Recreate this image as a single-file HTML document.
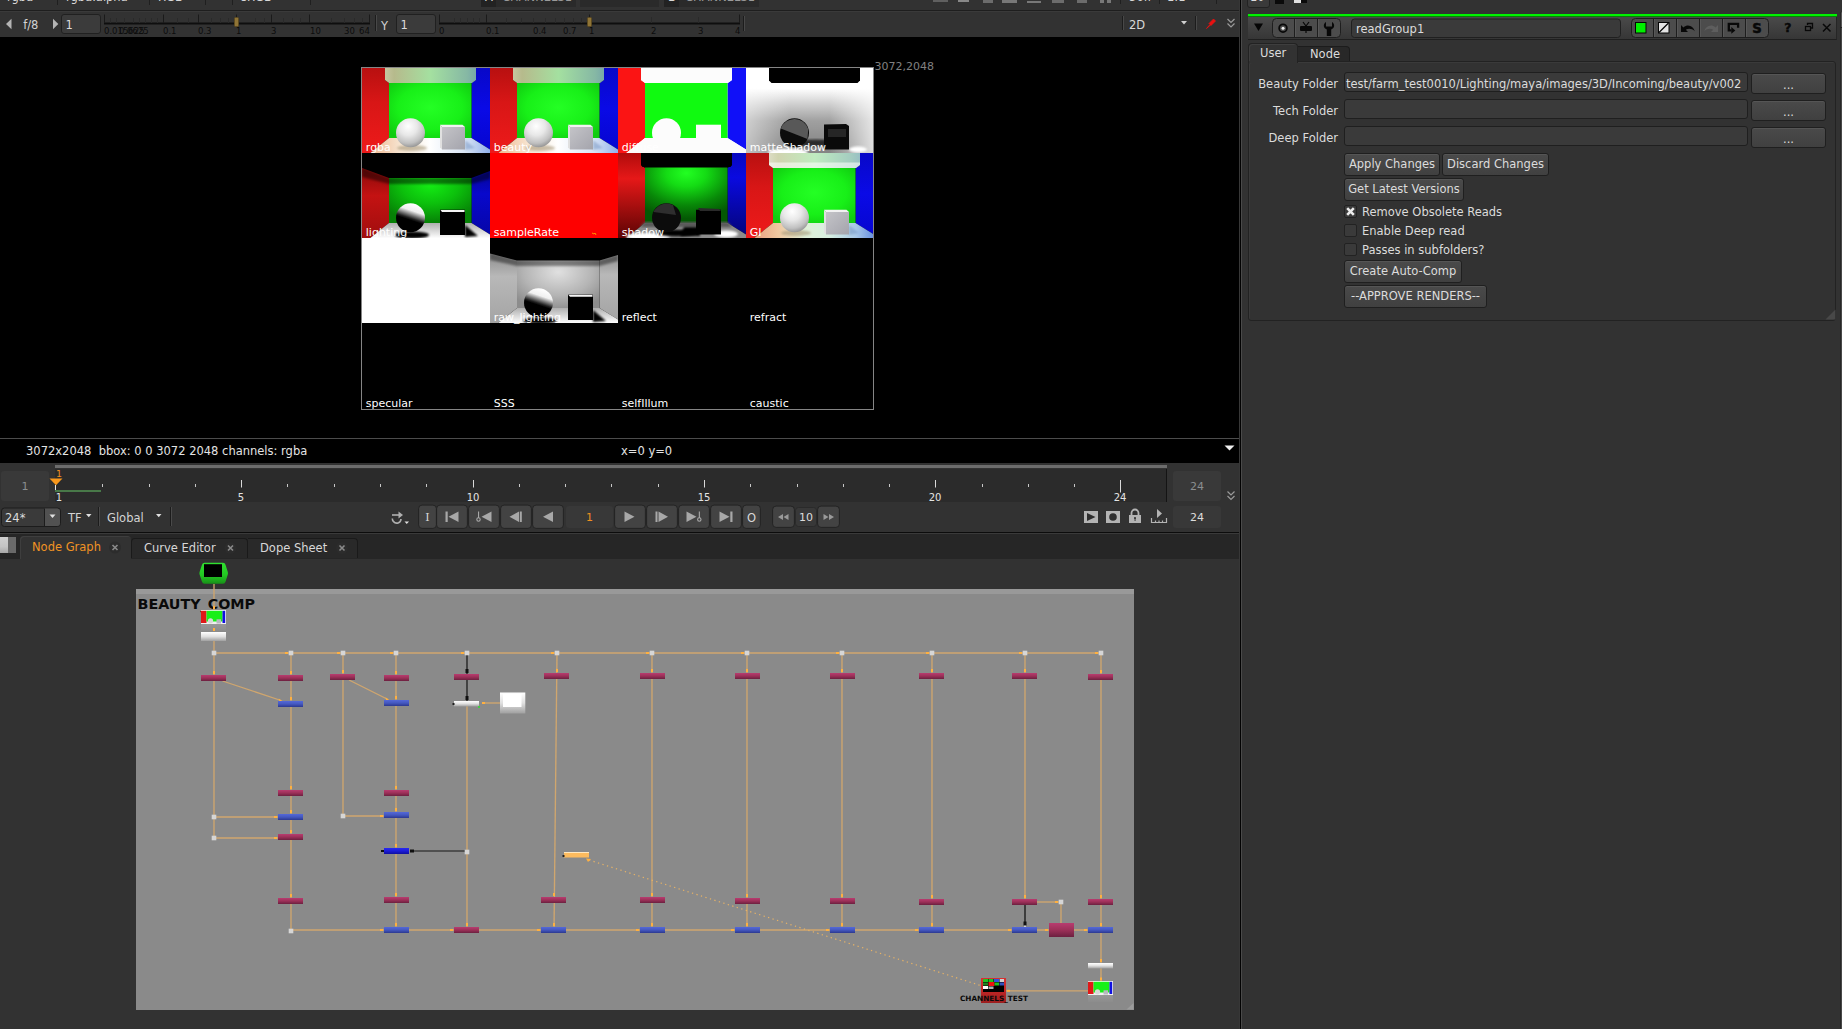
<!DOCTYPE html>
<html lang="en"><head><meta charset="utf-8"><title>Nuke</title>
<style>
html,body{margin:0;padding:0;background:#323232;}
body{width:1842px;height:1029px;overflow:hidden;font-family:"DejaVu Sans","Liberation Sans",sans-serif;font-size:11.5px;color:#dcdcdc;}
#app{position:relative;width:1842px;height:1029px;overflow:hidden;background:#323232;}
.abs{position:absolute;}
.t{position:absolute;white-space:pre;line-height:14px;}
svg{position:absolute;overflow:visible;}
.tk{position:absolute;top:25.5px;font-size:8.5px;line-height:10px;color:#0c0c0c;white-space:pre;}
.gl{font-family:"DejaVu Sans","Liberation Sans",sans-serif;font-size:11px;fill:#fff;}
.box{background:#393939;border-radius:3px;}
.tl{font-family:"DejaVu Sans","Liberation Sans",sans-serif;font-size:10px;fill:#e4e4e4;}
.fld{background:#3a3a3a;border:1px solid #1f1f1f;border-radius:3px;box-sizing:border-box;}
.btn{background:linear-gradient(#4a4a4a,#404040);border:1px solid #1f1f1f;border-radius:3px;box-sizing:border-box;color:#dcdcdc;text-align:center;line-height:21.5px;white-space:pre;box-shadow:inset 0 1px 0 #555;}
.chk{width:13px;height:13px;background:#3a3a3a;border:1px solid #222;border-radius:2px;box-sizing:border-box;}

</style></head>
<body>
<div id="app">
<!-- ===== top cropped toolbar strip ===== -->
<div class="abs" style="left:0;top:0;width:1240px;height:10px;background:#323232;overflow:hidden">
  <div class="t" style="left:7px;top:-10px;font-size:11.5px;color:#d8d8d8">rgba</div>
  <div class="abs" style="left:57px;top:0;width:1px;height:5px;background:#1f1f1f"></div>
  <div class="t" style="left:66px;top:-10px;font-size:11.5px;color:#d8d8d8">rgba.alpha</div>
  <div class="abs" style="left:149px;top:0;width:1px;height:5px;background:#1f1f1f"></div>
  <div class="t" style="left:158px;top:-10px;font-size:11.5px;color:#d8d8d8">RGB</div>
  <div class="abs" style="left:205px;top:0;width:1px;height:5px;background:#1f1f1f"></div>
  <div class="abs" style="left:232px;top:0;width:1px;height:5px;background:#1f1f1f"></div>
  <div class="t" style="left:241px;top:-10px;font-size:11.5px;color:#d8d8d8">sRGB</div>
  <div class="abs" style="left:310px;top:0;width:1px;height:5px;background:#1f1f1f"></div>
  <div class="abs" style="left:481px;top:0;width:95px;height:7px;background:#2a2a2a"></div>
  <div class="abs" style="left:481px;top:0;width:15px;height:7px;background:#222"></div>
  <div class="t" style="left:485px;top:-10px;font-size:11.5px;color:#d8d8d8">A</div>
  <div class="t" style="left:502px;top:-10px;font-size:11.5px;color:#9a9a9a">CHANNELS1</div>
  <div class="abs" style="left:580px;top:0;width:79px;height:7px;background:#2a2a2a"></div>
  <div class="abs" style="left:664px;top:0;width:95px;height:7px;background:#2a2a2a"></div>
  <div class="abs" style="left:664px;top:0;width:15px;height:7px;background:#222"></div>
  <div class="t" style="left:668px;top:-10px;font-size:11.5px;color:#d8d8d8">B</div>
  <div class="t" style="left:685px;top:-10px;font-size:11.5px;color:#9a9a9a">CHANNELS1</div>
  <div class="abs" style="left:933px;top:0;width:15px;height:2px;background:#606060"></div>
  <div class="abs" style="left:958px;top:0;width:11px;height:2px;background:#888"></div>
  <div class="abs" style="left:983px;top:0;width:10px;height:3px;background:#6c6c6c"></div>
  <div class="abs" style="left:1002px;top:0;width:15px;height:3px;background:#787878"></div>
  <div class="abs" style="left:1027px;top:1px;width:14px;height:2px;background:#787878"></div>
  <div class="abs" style="left:1052px;top:0;width:12px;height:3px;background:#6c6c6c"></div>
  <div class="abs" style="left:1077px;top:0;width:10px;height:3px;background:#6c6c6c"></div>
  <div class="abs" style="left:1100px;top:0;width:4px;height:3px;background:#787878"></div>
  <div class="abs" style="left:1107px;top:0;width:4px;height:3px;background:#787878"></div>
  <div class="abs" style="left:1120px;top:0;width:1px;height:4px;background:#1f1f1f"></div>
  <div class="t" style="left:1129px;top:-10px;font-size:11.5px;color:#d8d8d8">56fr</div>
  <div class="abs" style="left:1159px;top:0;width:1px;height:4px;background:#1f1f1f"></div>
  <div class="t" style="left:1167px;top:-10px;font-size:11.5px;color:#d8d8d8">1:1</div>
  <div class="abs" style="left:1216px;top:0;width:1px;height:4px;background:#1f1f1f"></div>
</div>
<div class="abs" style="left:0;top:10px;width:1240px;height:1px;background:#1e1e1e"></div>
<div class="abs" style="left:0;top:11px;width:1240px;height:1px;background:#3a3a3a"></div>

<!-- ===== viewer control row (gain / gamma) ===== -->
<div class="abs" style="left:0;top:12px;width:1240px;height:25px;background:#323232"></div>
<svg style="left:0;top:11px" width="1240" height="27" viewBox="0 11 1240 27">
  <!-- f-stop arrows -->
  <path d="M11.5 18.7 L11.5 29.3 L6 24 Z" fill="#b4b4b4"/>
  <path d="M53 18.7 L53 29.3 L58.3 24 Z" fill="#b4b4b4"/>
  <!-- input boxes -->
  <rect x="61.5" y="14.5" width="39" height="19" rx="2.5" fill="#3b3b3b" stroke="#202020"/>
  <rect x="396.5" y="14.5" width="39" height="19" rx="2.5" fill="#3b3b3b" stroke="#202020"/>
  <!-- gain slider -->
  <g stroke="#0e0e0e" stroke-width="1" fill="none">
    <path d="M104 23.5 H370" stroke-width="2"/>
    <path d="M104.5 14.5 V23 M163.5 14.5 V23 M198.5 14.5 V23 M236.5 14.5 V23 M271.5 14.5 V23 M309.5 14.5 V23 M369.5 14.5 V23" stroke="#1a1a1a"/>
    <path d="M110.5 18 V23 M116.5 18 V23 M124.5 18 V23 M133.5 18 V23 M139.5 18 V23 M145.5 18 V23 M151.5 18 V23 M157.5 18 V23 M177.5 18 V23 M188.5 18 V23 M211.5 18 V23 M220.5 18 V23 M228.5 18 V23 M255.5 18 V23 M264.5 18 V23 M283.5 18 V23 M292.5 18 V23 M300.5 18 V23 M331.5 18 V23 M344.5 18 V23 M354.5 18 V23 M362.5 18 V23" stroke="#2a2a2a"/>
  </g>
  <rect x="234.5" y="17.5" width="4" height="9" rx="1" fill="#8f7436" stroke="#5c4a20"/>
  <!-- separator -->
  <rect x="375" y="15" width="1" height="16" fill="#1c1c1c"/>
  <rect x="376" y="15" width="1" height="16" fill="#484848"/>
  <!-- gamma slider -->
  <g stroke="#0e0e0e" stroke-width="1" fill="none">
    <path d="M439 23.5 H740" stroke-width="2"/>
    <path d="M439.5 14.5 V23 M486.5 14.5 V23 M589.5 14.5 V23 M739.5 14.5 V23" stroke="#1a1a1a"/>
    <path d="M454.5 18 V23 M460.5 18 V23 M467.5 18 V23 M473.5 18 V23 M479.5 18 V23 M506.5 18 V23 M521.5 18 V23 M533.5 18 V23 M545.5 18 V23 M555.5 18 V23 M564.5 18 V23 M573.5 18 V23 M581.5 18 V23 M651.5 17 V23 M698.5 17 V23" stroke="#2a2a2a"/>
  </g>
  <rect x="587.5" y="17.5" width="4" height="9" rx="1" fill="#8f7436" stroke="#5c4a20"/>
  <rect x="743" y="16" width="1" height="15" fill="#1c1c1c"/>
  <rect x="744" y="16" width="1" height="15" fill="#484848"/>
  <!-- 2D dropdown -->
  <rect x="1122" y="16" width="1" height="14" fill="#1c1c1c"/>
  <rect x="1123" y="16" width="1" height="14" fill="#484848"/>
  <path d="M1181 21 L1187 21 L1184 24.5 Z" fill="#d0d0d0"/>
  <rect x="1195" y="16" width="1" height="14" fill="#1c1c1c"/>
  <rect x="1196" y="16" width="1" height="14" fill="#484848"/>
  <!-- red pen -->
  <path d="M1206.5 28.5 L1210 24.5 L1209 23.5 L1213.5 19 L1215.5 21 L1211 25.5 L1210.5 25 Z" fill="#e81010" stroke="#e81010" stroke-width="0.8"/>
  <!-- double chevron -->
  <path d="M1227.5 19 L1231 22.5 L1234.5 19 M1227.5 23.5 L1231 27 L1234.5 23.5" stroke="#9a9a9a" stroke-width="1.2" fill="none"/>
</svg>
<div class="t" style="left:23.2px;top:17.5px;font-size:11.5px;color:#d2d2d2">f/8</div>
<div class="t" style="left:65.5px;top:18px;font-size:11.5px;color:#dcdcdc">1</div>
<div class="t" style="left:381px;top:18.5px;font-size:11.5px;color:#d2d2d2">Y</div>
<div class="t" style="left:400.5px;top:18px;font-size:11.5px;color:#dcdcdc">1</div>
<div class="t" style="left:1129px;top:17.5px;font-size:11.5px;color:#d8d8d8">2D</div>
<div class="tk" style="left:104px">0.015625</div><div class="tk" style="left:119px">0.0625</div>
<div class="tk" style="left:163px">0.1</div><div class="tk" style="left:198px">0.3</div><div class="tk" style="left:236px">1</div>
<div class="tk" style="left:271px">3</div><div class="tk" style="left:310px">10</div><div class="tk" style="left:344px">30</div><div class="tk" style="left:359px">64</div>
<div class="tk" style="left:439px">0</div><div class="tk" style="left:486px">0.1</div><div class="tk" style="left:533px">0.4</div><div class="tk" style="left:563px">0.7</div>
<div class="tk" style="left:589px">1</div><div class="tk" style="left:651px">2</div><div class="tk" style="left:698px">3</div><div class="tk" style="left:735px">4</div>
<!-- ===== viewer ===== -->
<div class="abs" style="left:0;top:37px;width:1240px;height:401px;background:#000"></div>
<svg style="left:0;top:37px" width="1240" height="401" viewBox="0 37 1240 401">
<defs>
<clipPath id="cc0"><rect x="0" y="0" width="128" height="85"/></clipPath><clipPath id="cc1"><rect x="0" y="0" width="128" height="86"/></clipPath>
<linearGradient id="gRed" x1="0" y1="0" x2="0" y2="1"><stop offset="0" stop-color="#b81010"/><stop offset=".4" stop-color="#d81616"/><stop offset="1" stop-color="#ee1a1a"/></linearGradient>
<linearGradient id="gBlue" x1="0" y1="0" x2="0" y2="1"><stop offset="0" stop-color="#0808c8"/><stop offset=".5" stop-color="#0a0ae6"/><stop offset="1" stop-color="#0606d0"/></linearGradient>
<radialGradient id="gGreen" cx=".5" cy=".45" r=".65"><stop offset="0" stop-color="#24ff24"/><stop offset=".6" stop-color="#18f018"/><stop offset="1" stop-color="#10cc10"/></radialGradient>
<linearGradient id="gCeil" x1="0" y1="0" x2="1" y2="0"><stop offset="0" stop-color="#c6c6a0"/><stop offset=".1" stop-color="#b6ba8c"/><stop offset=".5" stop-color="#a4e0a0"/><stop offset=".9" stop-color="#86b8a4"/><stop offset="1" stop-color="#78a8a8"/></linearGradient>
<linearGradient id="gCeilGI" x1="0" y1="0" x2="1" y2="0"><stop offset="0" stop-color="#dcdcc4"/><stop offset=".1" stop-color="#d0d4b0"/><stop offset=".5" stop-color="#c0ecc0"/><stop offset=".9" stop-color="#a4ccc0"/><stop offset="1" stop-color="#98c0c4"/></linearGradient>
<linearGradient id="gFloorGI" x1="0" y1="0" x2="1" y2="0"><stop offset="0" stop-color="#e8a080"/><stop offset=".2" stop-color="#f0c8a0"/><stop offset=".42" stop-color="#e0f0d8"/><stop offset=".62" stop-color="#d8f0e0"/><stop offset=".85" stop-color="#a8c8e8"/><stop offset="1" stop-color="#6890e0"/></linearGradient>
<linearGradient id="gFloor" x1="0" y1="0" x2="1" y2="0"><stop offset="0" stop-color="#f0b890"/><stop offset=".25" stop-color="#f6e4d0"/><stop offset=".5" stop-color="#ffffff"/><stop offset=".8" stop-color="#d8e4f4"/><stop offset="1" stop-color="#90b0ec"/></linearGradient>
<radialGradient id="gSph" cx=".42" cy=".28" r=".78"><stop offset="0" stop-color="#ffffff"/><stop offset=".4" stop-color="#e8e8e8"/><stop offset=".75" stop-color="#c0c0c0"/><stop offset="1" stop-color="#888888"/></radialGradient>
<linearGradient id="gCube" x1="0" y1="0" x2="1" y2="1"><stop offset="0" stop-color="#c4c4c8"/><stop offset="1" stop-color="#a4a4ac"/></linearGradient>
<linearGradient id="gSphL" x1=".62" y1=".02" x2=".36" y2=".8"><stop offset="0" stop-color="#ffffff"/><stop offset=".3" stop-color="#f0f0f0"/><stop offset=".62" stop-color="#202020"/><stop offset=".7" stop-color="#000"/><stop offset="1" stop-color="#000"/></linearGradient>
<linearGradient id="gDkTop" x1="0" y1="0" x2="0" y2="1"><stop offset="0" stop-color="#000" stop-opacity="1"/><stop offset=".22" stop-color="#000" stop-opacity=".95"/><stop offset=".42" stop-color="#000" stop-opacity=".25"/><stop offset=".7" stop-color="#000" stop-opacity=".1"/><stop offset="1" stop-color="#000" stop-opacity=".3"/></linearGradient>
<linearGradient id="gMatte" x1="0" y1="0" x2="0" y2="1"><stop offset="0" stop-color="#fff"/><stop offset=".24" stop-color="#fff"/><stop offset=".42" stop-color="#d0d0d0"/><stop offset=".62" stop-color="#a0a0a0"/><stop offset=".85" stop-color="#8c8c8c"/><stop offset="1" stop-color="#848484"/></linearGradient>
<linearGradient id="gMatteS" x1="0" y1="0" x2="1" y2="0"><stop offset="0" stop-color="#fff" stop-opacity=".5"/><stop offset=".35" stop-color="#fff" stop-opacity="0"/><stop offset=".65" stop-color="#fff" stop-opacity="0"/><stop offset="1" stop-color="#fff" stop-opacity=".75"/></linearGradient>
<radialGradient id="gShGreen" cx=".5" cy=".12" r=".8" fx=".5" fy=".1"><stop offset="0" stop-color="#22ff22"/><stop offset=".3" stop-color="#14dc14"/><stop offset=".7" stop-color="#088808"/><stop offset="1" stop-color="#045804"/></radialGradient>
<linearGradient id="gShRed" x1="0" y1="0" x2="0" y2="1"><stop offset="0" stop-color="#b00c0c"/><stop offset=".3" stop-color="#e61818"/><stop offset="1" stop-color="#5c0404"/></linearGradient>
<linearGradient id="gShBlue" x1="0" y1="0" x2="0" y2="1"><stop offset="0" stop-color="#0808c0"/><stop offset=".3" stop-color="#0a0ae0"/><stop offset="1" stop-color="#04047c"/></linearGradient>
<radialGradient id="gRawBack" cx=".5" cy=".35" r=".7"><stop offset="0" stop-color="#e0e0e0"/><stop offset=".6" stop-color="#b4b4b4"/><stop offset="1" stop-color="#8c8c8c"/></radialGradient>
<linearGradient id="gRawSide" x1="0" y1="0" x2="0" y2="1"><stop offset="0" stop-color="#707070"/><stop offset=".45" stop-color="#b8b8b8"/><stop offset="1" stop-color="#a4a4a4"/></linearGradient>
<radialGradient id="gLGreen" cx=".5" cy=".3" r=".7"><stop offset="0" stop-color="#14ee14"/><stop offset=".5" stop-color="#0cc00c"/><stop offset="1" stop-color="#068006"/></radialGradient>
<linearGradient id="gLRed" x1="0" y1="0" x2="0" y2="1"><stop offset="0" stop-color="#6a0606"/><stop offset=".5" stop-color="#c41212"/><stop offset="1" stop-color="#a00e0e"/></linearGradient>
<linearGradient id="gLBlue" x1="0" y1="0" x2="0" y2="1"><stop offset="0" stop-color="#04046c"/><stop offset=".5" stop-color="#0808cc"/><stop offset="1" stop-color="#0606a8"/></linearGradient>
<linearGradient id="gLFloor" x1="0" y1="0" x2="0" y2="1"><stop offset="0" stop-color="#b0b0b0"/><stop offset="1" stop-color="#ffffff"/></linearGradient>
<filter id="bl1" x="-20%" y="-20%" width="140%" height="140%"><feGaussianBlur stdDeviation="1.2"/></filter>
<filter id="bl2" x="-20%" y="-20%" width="140%" height="140%"><feGaussianBlur stdDeviation="2.5"/></filter>
</defs>
<g transform="translate(362.00,68.00)"><g clip-path="url(#cc0)">
<rect width="128" height="85.25" fill="#000"/>
<polygon points="0,0 23,0 23,12 27,14.9 27,70 8,85.25 0,85.25" fill="url(#gRed)"/>
<polygon points="114,0 128,0 128,81.5 109.5,70 109.5,14.9 114,12" fill="url(#gBlue)"/>
<rect x="27" y="14.5" width="82.5" height="55.7" fill="url(#gGreen)"/>
<polygon points="27,70 109.5,70 128,81.5 128,85.25 8,85.25" fill="url(#gFloor)"/>
<polygon points="23,0 114,0 114,12 110,14.9 27,14.9 23,12" fill="url(#gCeil)"/>
<ellipse cx="50" cy="80" rx="15" ry="3" fill="#a09070" opacity=".55" filter="url(#bl1)"/>
<polygon points="103,72 113,80 103,82" fill="#7090c0" opacity=".5" filter="url(#bl1)"/>
<circle cx="48.5" cy="64.7" r="14.5" fill="url(#gSph)"/>
<polygon points="80,59 103,59 103,81.5 80,81.5" fill="url(#gCube)"/>
<polygon points="78,56.7 100.5,56.7 103,59 80,59" fill="#f2f2f2"/>
<polygon points="78,56.7 80,59 80,81.5 78,79.5" fill="#e0e0e0"/>
</g></g>
<g transform="translate(490.00,68.00)"><g clip-path="url(#cc0)">
<rect width="128" height="85.25" fill="#000"/>
<polygon points="0,0 23,0 23,12 27,14.9 27,70 8,85.25 0,85.25" fill="url(#gRed)"/>
<polygon points="114,0 128,0 128,81.5 109.5,70 109.5,14.9 114,12" fill="url(#gBlue)"/>
<rect x="27" y="14.5" width="82.5" height="55.7" fill="url(#gGreen)"/>
<polygon points="27,70 109.5,70 128,81.5 128,85.25 8,85.25" fill="url(#gFloor)"/>
<polygon points="23,0 114,0 114,12 110,14.9 27,14.9 23,12" fill="url(#gCeil)"/>
<ellipse cx="50" cy="80" rx="15" ry="3" fill="#a09070" opacity=".55" filter="url(#bl1)"/>
<polygon points="103,72 113,80 103,82" fill="#7090c0" opacity=".5" filter="url(#bl1)"/>
<circle cx="48.5" cy="64.7" r="14.5" fill="url(#gSph)"/>
<polygon points="80,59 103,59 103,81.5 80,81.5" fill="url(#gCube)"/>
<polygon points="78,56.7 100.5,56.7 103,59 80,59" fill="#f2f2f2"/>
<polygon points="78,56.7 80,59 80,81.5 78,79.5" fill="#e0e0e0"/>
</g></g>
<g transform="translate(618.00,68.00)"><g clip-path="url(#cc0)">
<rect width="128" height="85.25" fill="#fcfcfc"/>
<polygon points="0,0 23,0 23,12 27,14.9 27,70 8,85.25 0,85.25" fill="#fb1414"/>
<polygon points="114,0 128,0 128,81.5 109.5,70 109.5,14.9 114,12" fill="#1010f8"/>
<rect x="27" y="14.5" width="82.5" height="55.7" fill="#10fa10"/>
<polygon points="27,70 109.5,70 128,81.5 128,85.25 8,85.25" fill="#fcfcfc"/>
<polygon points="23,0 114,0 114,12 110,14.9 27,14.9 23,12" fill="#fcfcfc"/>
<circle cx="48.5" cy="64.7" r="14.5" fill="#fcfcfc"/>
<polygon points="78,56.7 103,56.7 103,81.5 78,81.5" fill="#fcfcfc"/>
</g></g>
<g transform="translate(746.00,68.00)"><g clip-path="url(#cc0)">
<rect width="128" height="85.25" fill="url(#gMatte)"/>
<rect width="128" height="85.25" fill="url(#gMatteS)"/>
<ellipse cx="70" cy="75" rx="30" ry="3.5" fill="#2c2c2c" filter="url(#bl1)"/>
<ellipse cx="42" cy="84.5" rx="20" ry="4" fill="#fff" filter="url(#bl1)"/>
<ellipse cx="112" cy="81.5" rx="9" ry="3" fill="#fff" filter="url(#bl1)"/>
<path d="M23,0 H114 V12.5 L111.5,15 H25.5 L23,12.5 Z" fill="#000"/>
<circle cx="48.5" cy="64.7" r="14.5" fill="#0c0c0c"/>
<path d="M34.8,60.5 A14.5,14.5 0 0 1 62.2,61 L61.5,71 Z" fill="#585858"/>
<polygon points="78,56.5 100,56 103,58 103,81.5 78,81.5" fill="#0a0a0a"/>
<rect x="82" y="61" width="18" height="8" fill="#262626"/>
</g></g>
<g transform="translate(362.00,153.00)"><g clip-path="url(#cc0)">
<rect width="128" height="85.25" fill="#000"/>
<polygon points="0,0 23,0 23,12 27,14.9 27,70 8,85.25 0,85.25" fill="url(#gLRed)"/>
<polygon points="114,0 128,0 128,81.5 109.5,70 109.5,14.9 114,12" fill="url(#gLBlue)"/>
<rect x="27" y="14.5" width="82.5" height="55.7" fill="url(#gLGreen)"/>
<polygon points="27,70 109.5,70 128,81.5 128,85.25 8,85.25" fill="url(#gLFloor)"/>
<polygon points="0,0 128,0 128,18 109.5,25 27,25 0,15" fill="#000"/>
<polygon points="0,15 27,25 109.5,25 128,18 128,26 109.5,31 27,31 0,24" fill="#000" opacity=".45" filter="url(#bl1)"/>
<ellipse cx="50" cy="82" rx="17" ry="3.4" fill="#000" filter="url(#bl1)"/>
<polygon points="103,72 116,83 103,84" fill="#000" filter="url(#bl1)"/>
<circle cx="48.5" cy="64.7" r="14.5" fill="url(#gSphL)" transform="rotate(0)"/>
<polygon points="78,56.7 103,56.7 103,82 78,82" fill="#000"/>
<polygon points="78.5,57 102.5,57 102.5,59 80,59" fill="#f4f4f4"/>
</g></g>
<g transform="translate(490.00,153.00)"><g clip-path="url(#cc0)">
<rect width="128" height="85.25" fill="#fe0000"/><path d="M102,80 l2,1 l1,-1 l1,2" stroke="#ff9000" stroke-width="1" fill="none"/>
</g></g>
<g transform="translate(618.00,153.00)"><g clip-path="url(#cc0)">
<rect width="128" height="85.25" fill="#000"/>
<polygon points="0,0 23,0 23,12 27,14.9 27,70 8,85.25 0,85.25" fill="url(#gShRed)"/>
<polygon points="114,0 128,0 128,81.5 109.5,70 109.5,14.9 114,12" fill="url(#gShBlue)"/>
<rect x="27" y="14.5" width="82.5" height="55.7" fill="url(#gShGreen)"/>
<polygon points="27,70 109.5,70 128,81.5 128,85.25 8,85.25" fill="#8c8c8c"/>
<polygon points="27,69 109.5,69 114,74 22,74" fill="#5a5a5a" filter="url(#bl1)"/>
<ellipse cx="30" cy="83.5" rx="22" ry="3.5" fill="#fff" filter="url(#bl1)"/>
<ellipse cx="108" cy="81" rx="12" ry="3.5" fill="#fff" filter="url(#bl1)"/>
<path d="M23,0 H114 V12 L112.5,14 H24.5 L23,12 Z" fill="#000"/>
<ellipse cx="58" cy="80" rx="20" ry="3.3" fill="#000" filter="url(#bl1)"/>
<polygon points="66,74 82,74 82,83 62,83" fill="#000" filter="url(#bl1)"/>
<circle cx="48.5" cy="64.7" r="14.5" fill="#0c0c0c"/>
<path d="M35.5,59 A14.5,14.5 0 0 1 55,52 L58,62 Z" fill="#2e2e2e"/>
<polygon points="78,56.7 103,56.7 103,81.5 78,81.5" fill="#000"/>
<polygon points="80,55 101,56 103,58 82,58" fill="#2a2a2a"/>
</g></g>
<g transform="translate(746.00,153.00)"><g clip-path="url(#cc0)">
<rect width="128" height="85.25" fill="#000"/>
<polygon points="0,0 23,0 23,12 27,14.9 27,70 8,85.25 0,85.25" fill="url(#gRed)"/>
<polygon points="114,0 128,0 128,81.5 109.5,70 109.5,14.9 114,12" fill="url(#gBlue)"/>
<rect x="27" y="14.5" width="82.5" height="55.7" fill="url(#gGreen)"/>
<polygon points="27,70 109.5,70 128,81.5 128,85.25 8,85.25" fill="url(#gFloorGI)"/>
<polygon points="23,0 114,0 114,12 110,14.9 27,14.9 23,12" fill="url(#gCeilGI)"/>
<polygon points="23,9.5 114,9.5 114,12 110,14.9 27,14.9 23,12" fill="#fff" opacity=".55"/>
<ellipse cx="50" cy="80" rx="15" ry="3" fill="#a09070" opacity=".55" filter="url(#bl1)"/>
<polygon points="103,72 113,80 103,82" fill="#7090c0" opacity=".5" filter="url(#bl1)"/>
<circle cx="48.5" cy="64.7" r="14.5" fill="url(#gSph)"/>
<polygon points="80,59 103,59 103,81.5 80,81.5" fill="url(#gCube)"/>
<polygon points="78,56.7 100.5,56.7 103,59 80,59" fill="#f2f2f2"/>
<polygon points="78,56.7 80,59 80,81.5 78,79.5" fill="#e0e0e0"/>
</g></g>
<g transform="translate(362.00,238.00)"><g clip-path="url(#cc0)">
<rect width="128" height="85.25" fill="#fff"/>
</g></g>
<g transform="translate(490.00,238.00)"><g clip-path="url(#cc0)">
<rect width="128" height="85.25" fill="#000"/>
<polygon points="0,0 23,0 23,12 27,14.9 27,70 8,85.25 0,85.25" fill="url(#gRawSide)"/>
<polygon points="114,0 128,0 128,81.5 109.5,70 109.5,14.9 114,12" fill="url(#gRawSide)"/>
<rect x="27" y="14.5" width="82.5" height="55.7" fill="url(#gRawBack)"/>
<polygon points="27,70 109.5,70 128,81.5 128,85.25 8,85.25" fill="url(#gLFloor)"/>
<polygon points="0,0 128,0 128,17 109.5,22.5 27,22.5 0,15.5" fill="#000"/>
<polygon points="0,15 27,22 109.5,22 128,17 128,23 109.5,28 27,28 0,22" fill="#000" opacity=".4" filter="url(#bl1)"/>
<ellipse cx="50" cy="82.5" rx="17" ry="3.2" fill="#000" filter="url(#bl1)"/>
<polygon points="103,72 116,83 103,84" fill="#000" filter="url(#bl1)"/>
<circle cx="48.5" cy="64.7" r="14.5" fill="url(#gSphL)"/>
<polygon points="78,56.7 103,56.7 103,82 78,82" fill="#000"/>
<polygon points="78.5,57 102.5,57 102.5,58.8 80,58.8" fill="#f4f4f4"/>
</g></g>
<text x="365.8" y="151.2" class="gl">rgba</text>
<text x="493.8" y="151.2" class="gl">beauty</text>
<text x="621.8" y="151.2" class="gl">diffuse</text>
<text x="749.8" y="151.2" class="gl">matteShadow</text>
<text x="365.8" y="236.2" class="gl">lighting</text>
<text x="493.8" y="236.2" class="gl">sampleRate</text>
<text x="621.8" y="236.2" class="gl">shadow</text>
<text x="749.8" y="236.2" class="gl">GI</text>
<text x="493.8" y="321.2" class="gl">raw_lighting</text>
<text x="621.8" y="321.2" class="gl">reflect</text>
<text x="749.8" y="321.2" class="gl">refract</text>
<text x="365.8" y="407.2" class="gl">specular</text>
<text x="493.8" y="407.2" class="gl">SSS</text>
<text x="621.8" y="407.2" class="gl">selfIllum</text>
<text x="749.8" y="407.2" class="gl">caustic</text>
<rect x="361.5" y="67.5" width="512" height="342" fill="none" stroke="#858585" stroke-width="1"/>
<text x="874.5" y="70" class="gl" style="fill:#808080">3072,2048</text>
</svg>
<div class="abs" style="left:0;top:438px;width:1240px;height:1px;background:#4c4c4c"></div>
<div class="abs" style="left:0;top:439px;width:1240px;height:24px;background:#000"></div>
<div class="t" style="left:26px;top:444px;color:#e4e4e4">3072x2048  bbox: 0 0 3072 2048 channels: rgba</div>
<div class="t" style="left:621px;top:444px;color:#e4e4e4">x=0 y=0</div>
<svg style="left:1222px;top:443px" width="14" height="10"><path d="M2.5 2.5 H12.5 L7.5 7.5 Z" fill="#f0f0f0"/></svg>
<!-- ===== timeline ===== -->
<div class="abs" style="left:0;top:463px;width:1240px;height:69px;background:#323232"></div>
<div class="abs" style="left:55px;top:469px;width:1112px;height:33px;background:#2b2b2b"></div>
<div class="abs" style="left:55px;top:465px;width:1112px;height:3px;background:#6c6c6c"></div>
<div class="abs" style="left:1166px;top:469px;width:1px;height:33px;background:#141414"></div>
<div class="abs box" style="left:1px;top:471px;width:48px;height:30px"></div>
<div class="abs box" style="left:1173px;top:471px;width:48px;height:30px"></div>
<div class="t" style="left:1px;top:480px;width:48px;text-align:center;font-size:11px;color:#8a8e90">1</div>
<div class="t" style="left:1173px;top:480px;width:48px;text-align:center;font-size:11px;color:#8a8e90">24</div>
<svg style="left:0;top:463px" width="1240" height="70" viewBox="0 463 1240 70">
<path d="M241.5 480 V487.5 M473.5 480 V487.5 M704.5 480 V487.5 M935.5 480 V487.5 M1120.5 480 V492.5" stroke="#dadada" stroke-width="1" fill="none"/>
<path d="M102.5 484 V487 M149.5 484 V487 M195.5 484 V487 M287.5 484 V487 M334.5 484 V487 M380.5 484 V487 M426.5 484 V487 M519.5 484 V487 M565.5 484 V487 M611.5 484 V487 M658.5 484 V487 M750.5 484 V487 M797.5 484 V487 M843.5 484 V487 M889.5 484 V487 M982.5 484 V487 M1028.5 484 V487 M1074.5 484 V487" stroke="#c8c8c8" stroke-width="1" fill="none"/>
<rect x="55" y="485" width="1" height="5" fill="#e8e8e8"/>
<rect x="55" y="490" width="46" height="2" fill="#487848"/>
<path d="M49.5 478.5 H62.5 L56 485.2 Z" fill="#f8981c"/>
<text x="59" y="501" text-anchor="middle" class="tl">1</text>
<text x="241" y="501" text-anchor="middle" class="tl">5</text>
<text x="473" y="501" text-anchor="middle" class="tl">10</text>
<text x="704" y="501" text-anchor="middle" class="tl">15</text>
<text x="935" y="501" text-anchor="middle" class="tl">20</text>
<text x="1120" y="501" text-anchor="middle" class="tl">24</text>
<text x="59" y="477" text-anchor="middle" class="tl" style="fill:#f09020;font-size:9.5px">1</text>
<path d="M1227.5 491.5 L1231 495 L1234.5 491.5 M1227.5 496 L1231 499.5 L1234.5 496" stroke="#9a9a9a" stroke-width="1.2" fill="none"/>
<rect x="1.5" y="508" width="59" height="18.5" rx="3" fill="#3a3a3a" stroke="#1c1c1c"/>
<path d="M44.5 508.5 H57 Q60 508.5 60 511.5 V523 Q60 526 57 526 H44.5 Z" fill="#515151"/>
<rect x="44" y="508.5" width="1" height="17.5" fill="#1c1c1c"/>
<path d="M49.5 514.5 H55.5 L52.5 518 Z" fill="#e0e0e0"/>
<path d="M86 514 H91.5 L88.75 517.3 Z" fill="#e0e0e0"/>
<rect x="98" y="507" width="1" height="19" fill="#1c1c1c"/><rect x="99" y="507" width="1" height="19" fill="#4a4a4a"/>
<path d="M156 514 H161.5 L158.75 517.3 Z" fill="#e0e0e0"/>
<rect x="170" y="507" width="1" height="19" fill="#1c1c1c"/><rect x="171" y="507" width="1" height="19" fill="#4a4a4a"/>
<g fill="none" stroke="#b0b0b0" stroke-width="1.6"><path d="M392 515 H400"/><path d="M393.5 521.5 A4.2 4.2 0 0 0 401 519"/><path d="M392.3 518.5 A4.2 4.2 0 0 0 393.8 521.8"/></g>
<path d="M398.5 511.5 L403 515 L398.5 518.5 Z" fill="#b0b0b0"/>
<path d="M404.5 521.5 H409 L406.75 524 Z" fill="#e0e0e0"/>
<rect x="418.6" y="505.1" width="17.8" height="23.3" rx="3.5" fill="#434343" stroke="#232323"/>
<rect x="436.6" y="505.1" width="30.8" height="23.3" rx="3.5" fill="#434343" stroke="#232323"/>
<rect x="468.6" y="505.1" width="30.8" height="23.3" rx="3.5" fill="#434343" stroke="#232323"/>
<rect x="500.6" y="505.1" width="30.8" height="23.3" rx="3.5" fill="#434343" stroke="#232323"/>
<rect x="532.6" y="505.1" width="30.8" height="23.3" rx="3.5" fill="#434343" stroke="#232323"/>
<rect x="614.6" y="505.1" width="30.8" height="23.3" rx="3.5" fill="#434343" stroke="#232323"/>
<rect x="646.6" y="505.1" width="30.8" height="23.3" rx="3.5" fill="#434343" stroke="#232323"/>
<rect x="678.6" y="505.1" width="30.8" height="23.3" rx="3.5" fill="#434343" stroke="#232323"/>
<rect x="710.6" y="505.1" width="30.8" height="23.3" rx="3.5" fill="#434343" stroke="#232323"/>
<rect x="742.6" y="505.1" width="17.8" height="23.3" rx="3.5" fill="#434343" stroke="#232323"/>
<rect x="445.5" y="511.5" width="2.2" height="10.5" fill="#a8a8a8"/><path d="M458.5 511.5 V522 L448.5 516.75 Z" fill="#a8a8a8"/>
<circle cx="478.5" cy="519.5" r="1.7" fill="none" stroke="#a8a8a8" stroke-width="1.1"/><rect x="478" y="511.5" width="1.1" height="6.5" fill="#a8a8a8"/><path d="M491.5 511.5 V522 L481.5 516.75 Z" fill="#a8a8a8"/>
<path d="M519 511.5 V522 L509.5 516.75 Z" fill="#a8a8a8"/><rect x="519.8" y="511.5" width="2" height="10.5" fill="#a8a8a8"/>
<path d="M553 511.5 V522 L543 516.75 Z" fill="#a8a8a8"/>
<rect x="566" y="506" width="47" height="22" rx="3" fill="#383838"/>
<path d="M624.5 511.5 V522 L634.5 516.75 Z" fill="#a8a8a8"/>
<rect x="655.5" y="511.5" width="2" height="10.5" fill="#a8a8a8"/><path d="M658.5 511.5 V522 L668 516.75 Z" fill="#a8a8a8"/>
<path d="M686.5 511.5 V522 L696.5 516.75 Z" fill="#a8a8a8"/><circle cx="699.3" cy="519.5" r="1.7" fill="none" stroke="#a8a8a8" stroke-width="1.1"/><rect x="698.8" y="511.5" width="1.1" height="6.5" fill="#a8a8a8"/>
<path d="M719.5 511.5 V522 L729.5 516.75 Z" fill="#a8a8a8"/><rect x="730.3" y="511.5" width="2.2" height="10.5" fill="#a8a8a8"/>
<rect x="772.6" y="506.1" width="21.8" height="21.3" rx="3.5" fill="#434343" stroke="#232323"/>
<rect x="817.6" y="506.1" width="21.8" height="21.3" rx="3.5" fill="#434343" stroke="#232323"/>
<rect x="795.5" y="507.5" width="21" height="19" rx="3" fill="#383838" stroke="#2a2a2a"/>
<path d="M783 514 V520 L778 517 Z M788.5 514 V520 L783.5 517 Z" fill="#9a9a9a"/>
<path d="M823.5 514 V520 L828.5 517 Z M829 514 V520 L834 517 Z" fill="#9a9a9a"/>
<rect x="1084" y="511" width="14" height="12" fill="#b4b4b4"/><path d="M1087 513 V521 L1095.5 517 Z" fill="#2e2e2e"/>
<rect x="1106" y="511" width="14" height="12" fill="#b4b4b4"/><circle cx="1113" cy="517" r="3.8" fill="#2e2e2e"/>
<rect x="1129" y="515" width="12" height="8" fill="#b4b4b4"/><path d="M1131.5 515.5 V513 A3.5 3.5 0 0 1 1138.5 513 V515.5" fill="none" stroke="#b4b4b4" stroke-width="1.8"/><circle cx="1135" cy="518" r="1" fill="#2e2e2e"/><rect x="1134.6" y="518" width="0.9" height="3" fill="#2e2e2e"/>
<path d="M1157 509 L1162 513.5 L1157 518 Z" fill="#b4b4b4"/><path d="M1151.5 518 V522.5 H1166.5 V518 M1155.5 520.5 V522.5 M1159 520.5 V522.5 M1162.5 520.5 V522.5" stroke="#b4b4b4" stroke-width="1.2" fill="none"/>
<rect x="1173" y="506" width="48" height="22" rx="3" fill="#383838"/>
</svg>
<div class="t" style="left:5px;top:511px;color:#dcdcdc">24*</div>
<div class="t" style="left:68px;top:511px;color:#d4d4d4">TF</div>
<div class="t" style="left:107px;top:511px;color:#d4d4d4">Global</div>
<div class="t" style="left:419px;top:511px;width:17px;text-align:center;color:#d8d8d8;font-family:'DejaVu Serif','Liberation Serif',serif;font-size:11px">I</div>
<div class="t" style="left:566px;top:511px;width:47px;text-align:center;font-size:11px;color:#f09020">1</div>
<div class="t" style="left:743px;top:511px;width:17px;text-align:center;color:#d8d8d8">O</div>
<div class="t" style="left:795px;top:511px;width:22px;text-align:center;font-size:11px;color:#dcdcdc">10</div>
<div class="t" style="left:1173px;top:511px;width:48px;text-align:center;font-size:11px;color:#dcdcdc">24</div>
<div class="abs" style="left:0;top:532px;width:1240px;height:1px;background:#0c0c0c"></div>
<div class="abs" style="left:0;top:533px;width:1240px;height:1px;background:#3a3a3a"></div>
<!-- ===== tab bar ===== -->
<div class="abs" style="left:0;top:534px;width:1240px;height:25px;background:#262626"></div>
<div class="abs" style="left:0;top:537px;width:8px;height:16px;background:linear-gradient(#d0d0d0,#c4c4c4 60%,#a8a8a8)"></div>
<div class="abs" style="left:8px;top:537px;width:8px;height:16px;background:#6a6a6a"></div>
<div class="abs" style="left:20px;top:536px;width:111px;height:23px;background:#323232;border-radius:4px 4px 0 0;box-shadow:inset 1px 1px 0 #3e3e3e"></div>
<div class="abs" style="left:131px;top:538px;width:117px;height:20px;background:#292929;border:1px solid #1a1a1a;border-bottom:none;border-radius:4px 4px 0 0;box-sizing:border-box"></div>
<div class="abs" style="left:248px;top:538px;width:110px;height:20px;background:#292929;border:1px solid #1a1a1a;border-bottom:none;border-left:none;border-radius:0 4px 0 0;box-sizing:border-box"></div>
<div class="t" style="left:32px;top:540px;color:#f09324">Node Graph</div>
<div class="t" style="left:144px;top:541px;color:#d8d8d8">Curve Editor</div>
<div class="t" style="left:260px;top:541px;color:#d8d8d8">Dope Sheet</div>
<svg style="left:0;top:534px" width="400" height="26" viewBox="0 534 400 26">
<circle cx="115" cy="547.5" r="6" fill="#2c2c2c"/><path d="M112.5 545.0 l5 5 m0 -5 l-5 5" stroke="#8a8a8a" stroke-width="1.6" fill="none"/>
<circle cx="230.5" cy="548" r="6" fill="#2c2c2c"/><path d="M228.0 545.5 l5 5 m0 -5 l-5 5" stroke="#8a8a8a" stroke-width="1.6" fill="none"/>
<circle cx="342" cy="548" r="6" fill="#2c2c2c"/><path d="M339.5 545.5 l5 5 m0 -5 l-5 5" stroke="#8a8a8a" stroke-width="1.6" fill="none"/>
</svg>
<!-- ===== node graph ===== -->
<div class="abs" style="left:0;top:559px;width:1240px;height:470px;background:#323232"></div>
<div class="abs" style="left:136px;top:589px;width:998px;height:421px;background:#8a8a8a"></div>
<div class="abs" style="left:136px;top:589px;width:998px;height:5px;background:#999"></div>
<svg style="left:0;top:559px" width="1240" height="470" viewBox="0 559 1240 470">
<defs>
<linearGradient id="nPink" x1="0" y1="0" x2="0" y2="1"><stop offset="0" stop-color="#b83c70"/><stop offset=".5" stop-color="#9c3058"/><stop offset="1" stop-color="#6c2040"/></linearGradient>
<linearGradient id="nBlue" x1="0" y1="0" x2="0" y2="1"><stop offset="0" stop-color="#5468d8"/><stop offset=".5" stop-color="#4458c0"/><stop offset="1" stop-color="#2c3890"/></linearGradient>
<linearGradient id="nBlue2" x1="0" y1="0" x2="0" y2="1"><stop offset="0" stop-color="#2828f0"/><stop offset=".5" stop-color="#1c1cd8"/><stop offset="1" stop-color="#1010a0"/></linearGradient>
<linearGradient id="nWhite" x1="0" y1="0" x2="0" y2="1"><stop offset="0" stop-color="#ffffff"/><stop offset=".5" stop-color="#e0e0e0"/><stop offset="1" stop-color="#a0a0a0"/></linearGradient>
<linearGradient id="nGray" x1="0" y1="0" x2="0" y2="1"><stop offset="0" stop-color="#b0b0b0"/><stop offset="1" stop-color="#8c8c8c"/></linearGradient>
<linearGradient id="nRed" x1="0" y1="0" x2="0" y2="1"><stop offset="0" stop-color="#d83030"/><stop offset=".5" stop-color="#c02626"/><stop offset="1" stop-color="#9c1e1e"/></linearGradient>
<linearGradient id="nGreen" x1="0" y1="0" x2="0" y2="1"><stop offset="0" stop-color="#30e030"/><stop offset=".6" stop-color="#22c822"/><stop offset="1" stop-color="#189018"/></linearGradient>
</defs>
<path d="M214 584 V611" stroke="#d0a66e" stroke-width="1.35" fill="none"/>
<path d="M214 641 V837" stroke="#d0a66e" stroke-width="1.35" fill="none"/>
<path d="M214 653 H1101" stroke="#d0a66e" stroke-width="1.35" fill="none"/>
<rect x="285" y="652" width="3" height="2" fill="#ffb040"/>
<rect x="337" y="652" width="3" height="2" fill="#ffb040"/>
<rect x="390" y="652" width="3" height="2" fill="#ffb040"/>
<rect x="461" y="652" width="3" height="2" fill="#ffb040"/>
<rect x="551" y="652" width="3" height="2" fill="#ffb040"/>
<rect x="646" y="652" width="3" height="2" fill="#ffb040"/>
<rect x="741" y="652" width="3" height="2" fill="#ffb040"/>
<rect x="836" y="652" width="3" height="2" fill="#ffb040"/>
<rect x="926" y="652" width="3" height="2" fill="#ffb040"/>
<rect x="1019" y="652" width="3" height="2" fill="#ffb040"/>
<rect x="1095" y="652" width="3" height="2" fill="#ffb040"/>
<path d="M291 653 V931" stroke="#d0a66e" stroke-width="1.35" fill="none"/>
<path d="M343 653 V816" stroke="#d0a66e" stroke-width="1.35" fill="none"/>
<path d="M396 653 V931" stroke="#d0a66e" stroke-width="1.35" fill="none"/>
<path d="M467 706 V931" stroke="#d0a66e" stroke-width="1.35" fill="none"/>
<path d="M557 653 L554 931" stroke="#d0a66e" stroke-width="1.35" fill="none" />
<path d="M652 653 V931" stroke="#d0a66e" stroke-width="1.35" fill="none"/>
<path d="M747 653 V931" stroke="#d0a66e" stroke-width="1.35" fill="none"/>
<path d="M842 653 V931" stroke="#d0a66e" stroke-width="1.35" fill="none"/>
<path d="M932 653 V931" stroke="#d0a66e" stroke-width="1.35" fill="none"/>
<path d="M1025 653 V900" stroke="#d0a66e" stroke-width="1.35" fill="none"/>
<path d="M1101 653 V982" stroke="#d0a66e" stroke-width="1.35" fill="none"/>
<path d="M467 655 V701" stroke="#1c1c1c" stroke-width="1.3" fill="none"/>
<path d="M222.5 681 L281 700.5" stroke="#d0a66e" stroke-width="1.3" fill="none" />
<path d="M282.5 701 l-4 -2.6 l1 2.8 z" fill="#ffb040"/>
<path d="M349 680 L388 699.5" stroke="#d0a66e" stroke-width="1.3" fill="none" />
<path d="M389.5 700.2 l-4 -3 l0.6 3 z" fill="#ffb040"/>
<path d="M214 817 H278" stroke="#d0a66e" stroke-width="1.35" fill="none"/>
<path d="M214 838 H278" stroke="#d0a66e" stroke-width="1.35" fill="none"/>
<path d="M343 816 H384" stroke="#d0a66e" stroke-width="1.35" fill="none"/>
<rect x="274" y="816" width="3" height="2" fill="#ffb040"/>
<rect x="274" y="837" width="3" height="2" fill="#ffb040"/>
<rect x="380" y="815" width="3" height="2" fill="#ffb040"/>
<path d="M291 930 H1113" stroke="#d0a66e" stroke-width="1.35" fill="none"/>
<path d="M410 851 H467" stroke="#3c3c3c" stroke-width="1.6" fill="none"/>
<rect x="410" y="849.5" width="4" height="3" fill="#101010"/>
<rect x="381" y="850" width="3" height="2" fill="#101010"/>
<path d="M483 703 H500" stroke="#d0a66e" stroke-width="1.35" fill="none"/>
<rect x="482" y="702" width="3" height="2" fill="#ffb040"/>
<path d="M589 860 L982 986" stroke="#e6b266" stroke-width="1.2" fill="none" stroke-dasharray="1.3 3.4"/>
<path d="M586 858.5 l5 0.5 l-3 3 z" fill="#ffb040"/>
<path d="M1006 990.8 H1088" stroke="#d0a66e" stroke-width="1.35" fill="none"/>
<rect x="1007" y="989.8" width="3" height="2" fill="#ffb040"/>
<path d="M1037 902 H1061" stroke="#d0a66e" stroke-width="1.35" fill="none"/>
<path d="M1061 902 V923" stroke="#d0a66e" stroke-width="1.35" fill="none"/>
<rect x="1055" y="901" width="3" height="2" fill="#ffb040"/>
<path d="M1025 905 V927" stroke="#2a2a2a" stroke-width="1.6" fill="none"/>
<rect x="1023.5" y="921.5" width="3" height="4" fill="#101010"/><rect x="1024" y="925.5" width="2" height="2" fill="#d0d0d0"/>
<text x="137.5" y="609" style="font:bold 14.3px 'DejaVu Sans','Liberation Sans',sans-serif;fill:#0a0a0a">BEAUTY_COMP</text>
<rect x="211.7" y="650.7" width="4.6" height="4.6" fill="#d6d6d6"/>
<rect x="288.7" y="650.7" width="4.6" height="4.6" fill="#d6d6d6"/>
<rect x="340.7" y="650.7" width="4.6" height="4.6" fill="#d6d6d6"/>
<rect x="393.7" y="650.7" width="4.6" height="4.6" fill="#d6d6d6"/>
<rect x="464.7" y="650.7" width="4.6" height="4.6" fill="#d6d6d6"/>
<rect x="554.7" y="650.7" width="4.6" height="4.6" fill="#d6d6d6"/>
<rect x="649.7" y="650.7" width="4.6" height="4.6" fill="#d6d6d6"/>
<rect x="744.7" y="650.7" width="4.6" height="4.6" fill="#d6d6d6"/>
<rect x="839.7" y="650.7" width="4.6" height="4.6" fill="#d6d6d6"/>
<rect x="929.7" y="650.7" width="4.6" height="4.6" fill="#d6d6d6"/>
<rect x="1022.7" y="650.7" width="4.6" height="4.6" fill="#d6d6d6"/>
<rect x="1098.7" y="650.7" width="4.6" height="4.6" fill="#d6d6d6"/>
<rect x="211.7" y="814.7" width="4.6" height="4.6" fill="#d6d6d6"/>
<rect x="211.7" y="835.7" width="4.6" height="4.6" fill="#d6d6d6"/>
<rect x="340.7" y="813.7" width="4.6" height="4.6" fill="#d6d6d6"/>
<rect x="288.7" y="928.7" width="4.6" height="4.6" fill="#d6d6d6"/>
<rect x="464.7" y="849.7" width="4.6" height="4.6" fill="#d6d6d6"/>
<rect x="1058.7" y="899.7" width="4.6" height="4.6" fill="#d6d6d6"/>
<rect x="201" y="675" width="25" height="6" fill="url(#nPink)"/>
<rect x="213" y="671" width="2" height="3" fill="#ffb040"/>
<rect x="278" y="675" width="25" height="6" fill="url(#nPink)"/>
<rect x="290" y="671" width="2" height="3" fill="#ffb040"/>
<rect x="330" y="674" width="25" height="6" fill="url(#nPink)"/>
<rect x="342" y="670" width="2" height="3" fill="#ffb040"/>
<rect x="384" y="675" width="25" height="6" fill="url(#nPink)"/>
<rect x="395" y="671" width="2" height="3" fill="#ffb040"/>
<rect x="454" y="674" width="25" height="6" fill="url(#nPink)"/>
<rect x="466" y="670" width="2" height="3" fill="#ffb040"/>
<rect x="544" y="673" width="25" height="6" fill="url(#nPink)"/>
<rect x="556" y="669" width="2" height="3" fill="#ffb040"/>
<rect x="640" y="673" width="25" height="6" fill="url(#nPink)"/>
<rect x="651" y="669" width="2" height="3" fill="#ffb040"/>
<rect x="735" y="673" width="25" height="6" fill="url(#nPink)"/>
<rect x="746" y="669" width="2" height="3" fill="#ffb040"/>
<rect x="830" y="673" width="25" height="6" fill="url(#nPink)"/>
<rect x="841" y="669" width="2" height="3" fill="#ffb040"/>
<rect x="919" y="673" width="25" height="6" fill="url(#nPink)"/>
<rect x="931" y="669" width="2" height="3" fill="#ffb040"/>
<rect x="1012" y="673" width="25" height="6" fill="url(#nPink)"/>
<rect x="1024" y="669" width="2" height="3" fill="#ffb040"/>
<rect x="1088" y="674" width="25" height="6" fill="url(#nPink)"/>
<rect x="1100" y="670" width="2" height="3" fill="#ffb040"/>
<rect x="278" y="790" width="25" height="6" fill="url(#nPink)"/>
<rect x="290" y="786" width="2" height="3" fill="#ffb040"/>
<rect x="384" y="790" width="25" height="6" fill="url(#nPink)"/>
<rect x="395" y="786" width="2" height="3" fill="#ffb040"/>
<rect x="278" y="834" width="25" height="6" fill="url(#nPink)"/>
<rect x="290" y="830" width="2" height="3" fill="#ffb040"/>
<rect x="278" y="898" width="25" height="6" fill="url(#nPink)"/>
<rect x="290" y="894" width="2" height="3" fill="#ffb040"/>
<rect x="384" y="897" width="25" height="6" fill="url(#nPink)"/>
<rect x="395" y="893" width="2" height="3" fill="#ffb040"/>
<rect x="541" y="897" width="25" height="6" fill="url(#nPink)"/>
<rect x="553" y="893" width="2" height="3" fill="#ffb040"/>
<rect x="640" y="897" width="25" height="6" fill="url(#nPink)"/>
<rect x="651" y="893" width="2" height="3" fill="#ffb040"/>
<rect x="735" y="898" width="25" height="6" fill="url(#nPink)"/>
<rect x="746" y="894" width="2" height="3" fill="#ffb040"/>
<rect x="830" y="898" width="25" height="6" fill="url(#nPink)"/>
<rect x="841" y="894" width="2" height="3" fill="#ffb040"/>
<rect x="919" y="899" width="25" height="6" fill="url(#nPink)"/>
<rect x="931" y="895" width="2" height="3" fill="#ffb040"/>
<rect x="1012" y="899" width="25" height="6" fill="url(#nPink)"/>
<rect x="1024" y="895" width="2" height="3" fill="#ffb040"/>
<rect x="1088" y="899" width="25" height="6" fill="url(#nPink)"/>
<rect x="1100" y="895" width="2" height="3" fill="#ffb040"/>
<rect x="454" y="927" width="25" height="6" fill="url(#nPink)"/>
<rect x="466" y="923" width="2" height="3" fill="#ffb040"/>
<rect x="278" y="701" width="25" height="6" fill="url(#nBlue)"/>
<rect x="290" y="697" width="2" height="3" fill="#ffb040"/>
<rect x="384" y="700" width="25" height="6" fill="url(#nBlue)"/>
<rect x="395" y="696" width="2" height="3" fill="#ffb040"/>
<rect x="278" y="814" width="25" height="6" fill="url(#nBlue)"/>
<rect x="290" y="810" width="2" height="3" fill="#ffb040"/>
<rect x="384" y="812" width="25" height="6" fill="url(#nBlue)"/>
<rect x="395" y="808" width="2" height="3" fill="#ffb040"/>
<rect x="384" y="927" width="25" height="6" fill="url(#nBlue)"/>
<rect x="395" y="923" width="2" height="3" fill="#ffb040"/>
<rect x="541" y="927" width="25" height="6" fill="url(#nBlue)"/>
<rect x="553" y="923" width="2" height="3" fill="#ffb040"/>
<rect x="640" y="927" width="25" height="6" fill="url(#nBlue)"/>
<rect x="651" y="923" width="2" height="3" fill="#ffb040"/>
<rect x="735" y="927" width="25" height="6" fill="url(#nBlue)"/>
<rect x="746" y="923" width="2" height="3" fill="#ffb040"/>
<rect x="830" y="927" width="25" height="6" fill="url(#nBlue)"/>
<rect x="841" y="923" width="2" height="3" fill="#ffb040"/>
<rect x="919" y="927" width="25" height="6" fill="url(#nBlue)"/>
<rect x="931" y="923" width="2" height="3" fill="#ffb040"/>
<rect x="1012" y="927" width="25" height="6" fill="url(#nBlue)"/>
<rect x="1088" y="927" width="25" height="6" fill="url(#nBlue)"/>
<rect x="1100" y="923" width="2" height="3" fill="#ffb040"/>
<rect x="380" y="929" width="3" height="2" fill="#ffb040"/>
<rect x="450" y="929" width="3" height="2" fill="#ffb040"/>
<rect x="537" y="929" width="3" height="2" fill="#ffb040"/>
<rect x="636" y="929" width="3" height="2" fill="#ffb040"/>
<rect x="731" y="929" width="3" height="2" fill="#ffb040"/>
<rect x="826" y="929" width="3" height="2" fill="#ffb040"/>
<rect x="915" y="929" width="3" height="2" fill="#ffb040"/>
<rect x="1008" y="929" width="3" height="2" fill="#ffb040"/>
<rect x="1084" y="929" width="3" height="2" fill="#ffb040"/>
<rect x="384" y="848" width="25" height="6" fill="url(#nBlue2)"/>
<rect x="395" y="844" width="2" height="3" fill="#ffb040"/>
<rect x="1049" y="923" width="25" height="14" fill="url(#nPink)"/>
<rect x="1045" y="929" width="3" height="2" fill="#ffb040"/>
<rect x="564" y="852" width="25" height="5.5" fill="#fdbb5e"/><rect x="564" y="852" width="25" height="1" fill="#ffe8c0"/><rect x="562.5" y="855" width="2" height="2" fill="#202020"/>
<rect x="454" y="701" width="25" height="5.5" fill="url(#nWhite)"/>
<rect x="452.5" y="703" width="2" height="2" fill="#202020"/><rect x="478" y="706" width="2" height="2" fill="#40d040"/>
<rect x="465.5" y="696" width="3" height="4" fill="#101010"/><rect x="465.5" y="669" width="3" height="4" fill="#101010"/>
<rect x="1088" y="963" width="25" height="5.5" fill="url(#nWhite)"/>
<rect x="1100" y="959" width="2" height="3" fill="#ffb040"/>
<rect x="201" y="632" width="25" height="9" fill="url(#nWhite)"/>
<rect x="500" y="692.5" width="25.3" height="21" fill="url(#nWhite)"/><rect x="503" y="694" width="18.5" height="13" fill="#ffffff"/>
<path d="M204.5 562.8 H223 Q225 562.8 225.6 565 L227.8 572 Q228.2 573.3 227.8 574.6 L225.6 581.6 Q225 583.8 223 583.8 H204.5 Q202.5 583.8 201.9 581.6 L199.6 574.6 Q199.2 573.3 199.6 572 L201.9 565 Q202.5 562.8 204.5 562.8 Z" fill="url(#nGreen)"/>
<rect x="204" y="564.2" width="18" height="12.8" fill="#000"/>
<g transform="translate(201,610)">
<rect x="0" y="0" width="25" height="21" fill="url(#nGray)"/>
<rect x="0" y="0" width="25" height="14" fill="#f0f0f0"/>
<rect x="0" y="0" width="5.5" height="13" fill="#e01818"/><rect x="5.5" y="0" width="16" height="11.5" fill="#18f018"/><rect x="21.5" y="0" width="3.5" height="13" fill="#1010e0"/>
<circle cx="9.5" cy="10.8" r="2.6" fill="#d8d8d8"/><rect x="15.5" y="9.3" width="4.5" height="4.2" fill="#b8b8c0"/>
<rect x="0" y="0" width="25" height="0.8" fill="#f4f4f4"/><rect x="24.2" y="0" width="0.8" height="14" fill="#f4f4f4"/>
</g>
<g transform="translate(1088,981)">
<rect x="0" y="0" width="25" height="21" fill="url(#nGray)"/>
<rect x="0" y="0" width="25" height="14" fill="#f0f0f0"/>
<rect x="0" y="0" width="5.5" height="13" fill="#e01818"/><rect x="5.5" y="0" width="16" height="11.5" fill="#18f018"/><rect x="21.5" y="0" width="3.5" height="13" fill="#1010e0"/>
<circle cx="9.5" cy="10.8" r="2.6" fill="#d8d8d8"/><rect x="15.5" y="9.3" width="4.5" height="4.2" fill="#b8b8c0"/>
<rect x="0" y="0" width="25" height="0.8" fill="#f4f4f4"/><rect x="24.2" y="0" width="0.8" height="14" fill="#f4f4f4"/>
</g>
<rect x="1100" y="977.5" width="2" height="3" fill="#ffb040"/>
<rect x="213" y="606" width="2" height="3" fill="#ffb040"/>
<rect x="213" y="628" width="2" height="3" fill="#ffb040"/>
<rect x="981" y="978" width="25" height="25" fill="url(#nRed)"/>
<rect x="983" y="979" width="21" height="13" fill="#000"/>
<rect x="983" y="979.0" width="5" height="3" fill="#20c020"/><rect x="988.5" y="979.0" width="5" height="3" fill="#20c020"/><rect x="994" y="979.0" width="5" height="3" fill="#3050e0"/><rect x="999.5" y="979.0" width="4.5" height="3" fill="#d0d0d0"/>
<rect x="983" y="982.5" width="5" height="3" fill="#208020"/><rect x="988.5" y="982.0" width="6" height="4" fill="#f01010"/><rect x="994.5" y="982.5" width="4.5" height="3" fill="#20c020"/><rect x="999.5" y="982.5" width="4.5" height="3" fill="#3050c0"/>
<rect x="983" y="986.0" width="5" height="3" fill="#ffffff"/><rect x="988.5" y="986.5" width="5" height="2.5" fill="#b0b0b0"/>
<text x="994" y="1001" text-anchor="middle" style="font:bold 7.3px 'DejaVu Sans','Liberation Sans',sans-serif;fill:#0a0a0a">CHANNELS_TEST</text>
<path d="M1133.5 1003 L1126.5 1009.5 H1133.5 Z" fill="#9c9c9c"/>
</svg>
<!-- ===== properties panel ===== -->
<div class="abs" style="left:1240px;top:0;width:602px;height:1029px;background:#323232"></div>
<div class="abs" style="left:1239px;top:0;width:1px;height:1029px;background:#373737"></div>
<div class="abs" style="left:1240px;top:0;width:1px;height:1029px;background:#020202"></div>
<div class="abs" style="left:1241px;top:0;width:1px;height:1029px;background:#4a4a4a"></div>
<div class="abs" style="left:1247px;top:-12px;width:21px;height:18px;border:1px solid #222;border-radius:3px;background:#3a3a3a"></div>
<div class="t" style="left:1250px;top:-10px;color:#dcdcdc">10</div>
<div class="abs" style="left:1275px;top:0;width:9px;height:4px;background:#0a0a0a"></div>
<div class="abs" style="left:1294px;top:0;width:8px;height:3px;background:#e0e0e0"></div><div class="abs" style="left:1301px;top:0;width:6px;height:3px;background:#0a0a0a"></div>
<div class="abs" style="left:1248px;top:14px;width:589px;height:2px;background:#00f200"></div><div class="abs" style="left:1248px;top:16px;width:589px;height:1px;background:#0a7a0a"></div>
<div class="abs" style="left:1248px;top:17px;width:589px;height:23px;background:linear-gradient(#4a4a4a,#363636);border-bottom:1px solid #1f1f1f;border-right:1px solid #262626;box-sizing:border-box"></div>
<svg style="left:1240px;top:0" width="602" height="70" viewBox="1240 0 602 70">
<path d="M1254 23.5 H1263 L1258.5 31 Z" fill="#050505"/>
<rect x="1272.5" y="18.5" width="68" height="19" rx="4" fill="#4c4c4c" stroke="#1e1e1e"/>
<path d="M1294.5 19 V37 M1317.5 19 V37" stroke="#1e1e1e"/><path d="M1295.5 19 V37 M1318.5 19 V37" stroke="#585858"/>
<circle cx="1283" cy="28.2" r="3.9" fill="none" stroke="#080808" stroke-width="1.7"/><circle cx="1283" cy="28.2" r="1.5" fill="#f0f0f0"/>
<rect x="1300" y="26" width="12" height="5" rx="1" fill="#080808"/><path d="M1303 22 L1306 26 L1309 22 M1306 31 V33" stroke="#080808" stroke-width="1.2" fill="none"/>
<path d="M1326 22 C1323 24 1323 28 1326.8 29.5 V36 H1331.2 V29.5 C1335 28 1335 24 1332 22 V26.5 H1326 Z" fill="#080808"/>
<rect x="1351.5" y="19" width="269" height="18.5" rx="3" fill="#3a3a3a" stroke="#202020"/>
<rect x="1631.5" y="18.5" width="137" height="19" rx="4" fill="#4c4c4c" stroke="#1e1e1e"/>
<path d="M1653.5 19 V37" stroke="#1e1e1e"/><path d="M1654.5 19 V37" stroke="#585858"/>
<path d="M1676.5 19 V37" stroke="#1e1e1e"/><path d="M1677.5 19 V37" stroke="#585858"/>
<path d="M1699.5 19 V37" stroke="#1e1e1e"/><path d="M1700.5 19 V37" stroke="#585858"/>
<path d="M1722.5 19 V37" stroke="#1e1e1e"/><path d="M1723.5 19 V37" stroke="#585858"/>
<path d="M1745.5 19 V37" stroke="#1e1e1e"/><path d="M1746.5 19 V37" stroke="#585858"/>
<rect x="1635.5" y="22.5" width="10.5" height="10.5" fill="#00f000" stroke="#050505"/>
<rect x="1658.5" y="22.5" width="10.5" height="10.5" fill="#e4e4e4" stroke="#050505"/><path d="M1659 32.5 L1668.5 23" stroke="#050505" stroke-width="1.2"/>
<path d="M1681 25 L1681 32 L1688 32 L1685.8 29.8 C1688.5 28.2 1692 28.6 1694.8 31.2 C1693 26.2 1688.3 23.6 1683.4 27.4 Z" fill="#080808"/>
<path d="M1681 25 L1681 32 L1688 32 L1685.8 29.8 C1688.5 28.2 1692 28.6 1694.8 31.2 C1693 26.2 1688.3 23.6 1683.4 27.4 Z" fill="#5e5e5e" transform="translate(3399,0) scale(-1,1)"/>
<path d="M1738.1 27.8 V23.9 H1728.8 V30.4 H1731.5" fill="none" stroke="#080808" stroke-width="2.3"/><path d="M1731.3 27 L1735.3 30.4 L1731.3 33.8 Z" fill="#080808"/>
<text x="1757" y="32.6" text-anchor="middle" style="font:bold 13.2px 'DejaVu Sans','Liberation Sans',sans-serif;fill:#080808;stroke:#080808;stroke-width:.5px">S</text>
<text x="1788" y="32.2" text-anchor="middle" style="font:bold 12.5px 'DejaVu Sans','Liberation Sans',sans-serif;fill:#080808;stroke:#080808;stroke-width:.4px">?</text>
<path d="M1807.5 25 V23.5 H1812.5 V28 H1811" fill="none" stroke="#080808" stroke-width="1.3"/><rect x="1805.5" y="26.5" width="5" height="4" fill="none" stroke="#080808" stroke-width="1.3"/>
<path d="M1823 24 L1830.5 31.5 M1830.5 24 L1823 31.5" stroke="#080808" stroke-width="1.5"/>
</svg>
<div class="t" style="left:1356px;top:22px;color:#dcdcdc">readGroup1</div>
<div class="abs" style="left:1248px;top:61px;width:588px;height:260px;border:1px solid #222;border-radius:3px;box-sizing:border-box;background:#323232;box-shadow:inset 1px 1px 0 #3a3a3a"></div>
<div class="abs" style="left:1297px;top:46px;width:53px;height:15px;background:#282828;border:1px solid #1c1c1c;border-bottom:none;border-radius:0 4px 0 0;box-sizing:border-box"></div>
<div class="abs" style="left:1248px;top:43px;width:50px;height:20px;background:#323232;border:1px solid #222;border-bottom:none;border-radius:4px 4px 0 0;box-sizing:border-box;box-shadow:inset 1px 1px 0 #3e3e3e"></div>
<div class="abs" style="left:1249px;top:61px;width:48px;height:2px;background:#323232"></div>
<div class="t" style="left:1260px;top:46px;color:#dcdcdc">User</div>
<div class="t" style="left:1310px;top:47px;color:#dcdcdc">Node</div>
<div class="t" style="left:1248px;top:77px;width:90px;text-align:right;color:#dcdcdc">Beauty Folder</div>
<div class="abs fld" style="left:1344px;top:72px;width:404px;height:20px"></div>
<div class="t" style="left:1346px;top:77px;color:#dcdcdc">test/farm_test0010/Lighting/maya/images/3D/Incoming/beauty/v002</div>
<div class="abs btn" style="left:1751px;top:73px;width:75px;height:21px"><span style="position:relative;top:1px">...</span></div>
<div class="t" style="left:1248px;top:104px;width:90px;text-align:right;color:#dcdcdc">Tech Folder</div>
<div class="abs fld" style="left:1344px;top:99px;width:404px;height:20px"></div>
<div class="abs btn" style="left:1751px;top:100px;width:75px;height:21px"><span style="position:relative;top:1px">...</span></div>
<div class="t" style="left:1248px;top:131px;width:90px;text-align:right;color:#dcdcdc">Deep Folder</div>
<div class="abs fld" style="left:1344px;top:126px;width:404px;height:20px"></div>
<div class="abs btn" style="left:1751px;top:127px;width:75px;height:21px"><span style="position:relative;top:1px">...</span></div>
<div class="abs btn" style="left:1344px;top:153px;width:96px;height:23px">Apply Changes</div>
<div class="abs btn" style="left:1442px;top:153px;width:107px;height:23px">Discard Changes</div>
<div class="abs btn" style="left:1344px;top:178px;width:120px;height:23px">Get Latest Versions</div>
<div class="abs btn" style="left:1344px;top:260px;width:118px;height:23px">Create Auto-Comp</div>
<div class="abs btn" style="left:1344px;top:285px;width:143px;height:23px">--APPROVE RENDERS--</div>
<div class="abs chk" style="left:1344px;top:205px"></div>
<svg style="left:1344px;top:205px" width="13" height="13"><path d="M3.2 3.2 L9.8 9.8 M9.8 3.2 L3.2 9.8" stroke="#ececec" stroke-width="2.6" stroke-linecap="butt"/></svg>
<div class="t" style="left:1362px;top:205px;color:#dcdcdc">Remove Obsolete Reads</div>
<div class="abs chk" style="left:1344px;top:224px"></div>
<div class="t" style="left:1362px;top:224px;color:#dcdcdc">Enable Deep read</div>
<div class="abs chk" style="left:1344px;top:243px"></div>
<div class="t" style="left:1362px;top:243px;color:#dcdcdc">Passes in subfolders?</div>
<svg style="left:1825px;top:309px" width="11" height="11"><path d="M0.5 10.5 L10.5 0.5 V10.5 Z" fill="#505050" opacity=".75"/></svg>
<div class="abs" style="left:1840px;top:12px;width:1px;height:1017px;background:#282828"></div>
<div class="abs" style="left:1841px;top:12px;width:1px;height:1017px;background:#484848"></div>
<div class="abs" style="left:1841px;top:13px;width:1px;height:14px;background:#585858"></div>
<div class="abs" style="left:1840px;top:27px;width:2px;height:1px;background:#222"></div>
</div>
</body></html>
